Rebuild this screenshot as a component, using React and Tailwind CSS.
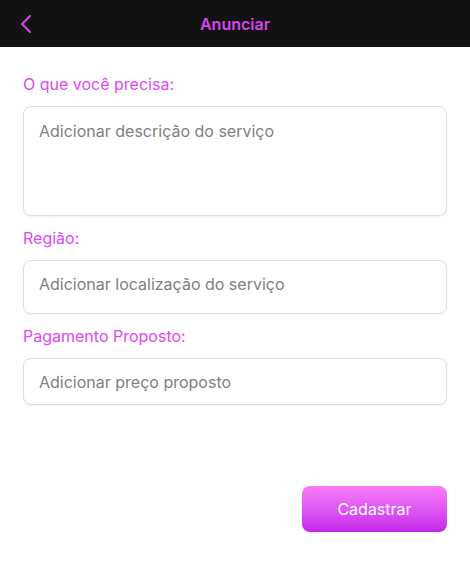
import { useState } from "react";

const Field = ({ label, children }) => (
  <div className="flex flex-col">
    <label className="text-[16px] leading-5 text-[#e048f2] mb-[12px]">{label}</label>
    {children}
  </div>
);

export default function App() {
  const [desc, setDesc] = useState("");
  const [regiao, setRegiao] = useState("");
  const [preco, setPreco] = useState("");

  return (
    <div className="w-[470px] h-[564px] bg-white flex flex-col font-['Inter',sans-serif]">
      <header className="h-[47px] bg-[#121212] flex items-center relative">
        <button className="absolute left-[19px] top-[14px] text-[#d545ee]">
          <svg width="14" height="20" viewBox="0 0 14 20" fill="none">
            <path d="M11 2L3 10L11 18" stroke="currentColor" strokeWidth="2" strokeLinecap="round" strokeLinejoin="round" />
          </svg>
        </button>
        <h1 className="flex-1 text-center text-[16px] font-semibold text-[#d545ee]">Anunciar</h1>
      </header>

      <main className="flex flex-col px-[23px] pt-[27px]">
        <Field label="O que você precisa:">
          <textarea
            value={desc}
            onChange={(e) => setDesc(e.target.value)}
            placeholder="Adicionar descrição do serviço"
            className="h-[110px] w-full resize-none rounded-lg border border-[#dedede] shadow-[0_1px_2px_rgba(0,0,0,0.06)] px-[15px] py-[12px] text-[16px] text-gray-700 placeholder:text-[#808080] outline-none"
          />
        </Field>
        <div className="h-[12px]" />
        <Field label="Região:">
          <input
            value={regiao}
            onChange={(e) => setRegiao(e.target.value)}
            placeholder="Adicionar localização do serviço"
            className="h-[54px] w-full rounded-lg border border-[#dedede] shadow-[0_1px_2px_rgba(0,0,0,0.06)] px-[15px] pb-[6px] text-[16px] text-gray-700 placeholder:text-[#808080] outline-none"
          />
        </Field>
        <div className="h-[12px]" />
        <Field label="Pagamento Proposto:">
          <input
            value={preco}
            onChange={(e) => setPreco(e.target.value)}
            placeholder="Adicionar preço proposto"
            className="h-[47px] w-full rounded-lg border border-[#dedede] shadow-[0_1px_2px_rgba(0,0,0,0.06)] px-[15px] text-[16px] text-gray-700 placeholder:text-[#808080] outline-none"
          />
        </Field>

        <div className="flex justify-end mt-[81px]">
          <button className="w-[145px] h-[46px] rounded-lg bg-gradient-to-b from-[#fa7cf8] to-[#c424ea] text-white text-[16px]">
            Cadastrar
          </button>
        </div>
      </main>
    </div>
  );
}
